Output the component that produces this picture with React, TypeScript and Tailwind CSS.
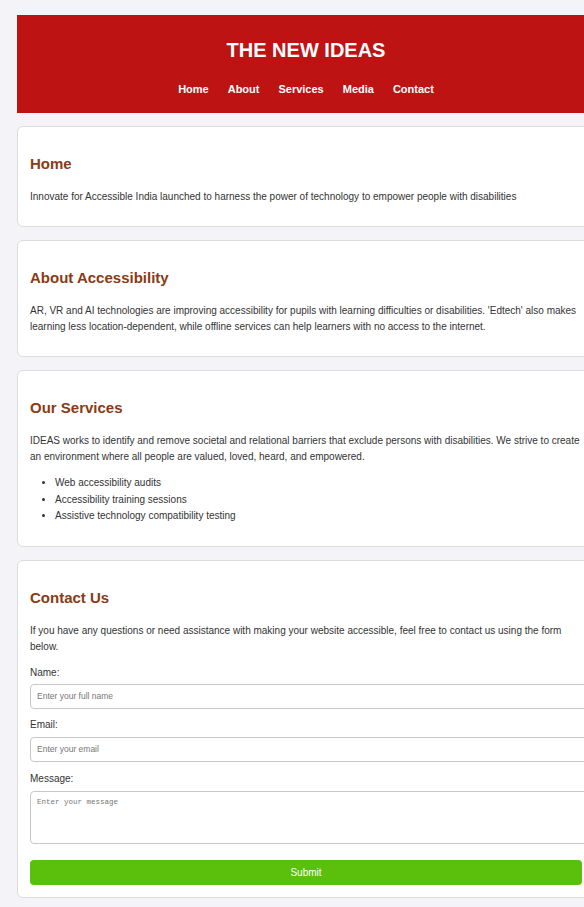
import React from 'react';

const navItems = ['Home', 'About', 'Services', 'Media', 'Contact'];

const Card: React.FC<{ title: string; className?: string; children: React.ReactNode }> = ({ title, className = '', children }) => (
  <section className={`bg-white border border-[#dcdcdf] rounded-[6px] px-[12px] pt-[28px] ${className}`}>
    <h2 className="text-[15px] leading-[18px] font-bold text-[#8b3a15] mb-[16px]">{title}</h2>
    {children}
  </section>
);

const App: React.FC = () => {
  return (
    <div className="min-h-screen bg-[#f4f4f8] overflow-hidden pt-[15px] pl-[17px] pb-[10px] font-['Liberation_Sans',Arial,sans-serif] text-[#333]">
      <div className="w-[578px] flex flex-col gap-[13px]">
        <header className="bg-[#bd1313] h-[98px] flex flex-col items-center pt-[23px]">
          <h1 className="text-white text-[20px] leading-[24px] font-bold">THE NEW IDEAS</h1>
          <nav className="flex gap-[19px] mt-[21px]">
            {navItems.map((n) => (
              <a key={n} href="#" className="text-white text-[11px] leading-[13px] font-bold">
                {n}
              </a>
            ))}
          </nav>
        </header>

        <Card title="Home" className="pb-[21px]">
          <p className="text-[10px] leading-[16px]">
            Innovate for Accessible India launched to harness the power of technology to empower people with disabilities
          </p>
        </Card>

        <Card title="About Accessibility" className="pb-[21px]">
          <p className="text-[10px] leading-[16px]">
            AR, VR and AI technologies are improving accessibility for pupils with learning difficulties or disabilities. 'Edtech' also makes learning less location-dependent, while offline services can help learners with no access to the internet.
          </p>
        </Card>

        <Card title="Our Services" className="pb-[21px]">
          <p className="text-[10px] leading-[16px]">
            IDEAS works to identify and remove societal and relational barriers that exclude persons with disabilities. We strive to create an environment where all people are valued, loved, heard, and empowered.
          </p>
          <ul className="list-disc pl-[25px] mt-[10px] text-[10px] leading-[16.5px]">
            <li>Web accessibility audits</li>
            <li>Accessibility training sessions</li>
            <li>Assistive technology compatibility testing</li>
          </ul>
        </Card>

        <Card title="Contact Us" className="pb-[12px]">
          <p className="text-[10px] leading-[16px]">
            If you have any questions or need assistance with making your website accessible, feel free to contact us using the form below.
          </p>
          <form className="flex flex-col mt-[10px]" onSubmit={(e) => e.preventDefault()}>
            <label className="text-[10px] leading-[16px]">Name:</label>
            <input
              type="text"
              placeholder="Enter your full name"
              className="mt-[3px] w-[566px] h-[25px] border border-[#c8c8c8] rounded-[4px] px-[6px] text-[8.5px] placeholder:text-[#777] bg-white"
            />
            <label className="text-[10px] leading-[16px] mt-[8px]">Email:</label>
            <input
              type="email"
              placeholder="Enter your email"
              className="mt-[4px] w-[566px] h-[25px] border border-[#c8c8c8] rounded-[4px] px-[6px] text-[8.5px] placeholder:text-[#777] bg-white"
            />
            <label className="text-[10px] leading-[16px] mt-[9px]">Message:</label>
            <textarea
              placeholder="Enter your message"
              className="mt-[4px] w-[566px] h-[53px] border border-[#c8c8c8] rounded-[4px] px-[6px] py-[5px] text-[7.5px] font-['Liberation_Mono',monospace] placeholder:text-[#777] resize-none bg-white"
            />
            <button
              type="submit"
              className="mt-[16px] w-[552px] h-[25px] bg-[#5ac00c] text-white text-[10px] rounded-[4px]"
            >
              Submit
            </button>
          </form>
        </Card>
      </div>
    </div>
  );
};

export default App;
